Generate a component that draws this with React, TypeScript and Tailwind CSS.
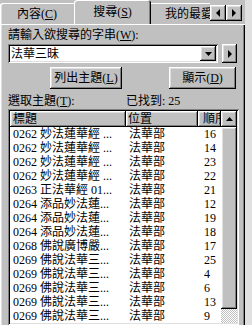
import React from 'react';

const raised =
  'shadow-[inset_-1px_-1px_0_#000,inset_1px_1px_0_#fff,inset_-2px_-2px_0_#808080,inset_2px_2px_0_#dfdfdf]';
const sunken =
  'shadow-[inset_1px_1px_0_#808080,inset_-1px_-1px_0_#fff,inset_2px_2px_0_#000,inset_-2px_-2px_0_#dfdfdf]';

const rows = [
  ['0262 妙法蓮華經 ...', '法華部', '16'],
  ['0262 妙法蓮華經 ...', '法華部', '14'],
  ['0262 妙法蓮華經 ...', '法華部', '23'],
  ['0262 妙法蓮華經 ...', '法華部', '22'],
  ['0263 正法華經 01...', '法華部', '21'],
  ['0264 添品妙法蓮...', '法華部', '12'],
  ['0264 添品妙法蓮...', '法華部', '19'],
  ['0264 添品妙法蓮...', '法華部', '18'],
  ['0268 佛說廣博嚴...', '法華部', '17'],
  ['0269 佛說法華三...', '法華部', '25'],
  ['0269 佛說法華三...', '法華部', '4'],
  ['0269 佛說法華三...', '法華部', '6'],
  ['0269 佛說法華三...', '法華部', '13'],
  ['0269 佛說法華三...', '法華部', '9'],
];

function Tri({ dir }: { dir: 'left' | 'right' | 'down' | 'up' }) {
  const pts = {
    left: '5,0 5,8 1,4',
    right: '1,0 1,8 5,4',
    down: '0,2 7,2 3.5,6',
    up: '0,6 7,6 3.5,2',
  }[dir];
  const w = dir === 'left' || dir === 'right' ? 6 : 7;
  return (
    <svg width={w} height={8} viewBox={`0 0 ${w} 8`}>
      <polygon points={pts} fill="#000" />
    </svg>
  );
}

export default function App() {
  return (
    <div
      className="w-[252px] h-[325px] bg-[#e0e0e0] overflow-hidden flex flex-col text-[12px] leading-[14px] text-black"
      style={{ fontFamily: '"Liberation Serif", "Noto Sans CJK TC", serif' }}
    >
      {/* tab strip */}
      <div className="h-[24px] flex items-start bg-[#c0c0c0] w-[245px]">
        <div className="flex-1 h-full flex items-end overflow-hidden">
          <div className="w-[74px] h-[21px] shrink-0 flex items-center justify-center rounded-tl-[3px] shadow-[inset_1px_1px_0_#fff,inset_2px_0_0_#dfdfdf]">
            內容(<span className="underline">C</span>)
          </div>
          <div className="relative z-10 -mb-px w-[77px] h-[25px] shrink-0 bg-[#c0c0c0] flex items-center justify-center pb-[2px] rounded-t-[3px] shadow-[inset_1px_1px_0_#fff,inset_-1px_0_0_#000,inset_-2px_0_0_#808080]">
            搜尋(<span className="underline">S</span>)
          </div>
          <div className="w-[80px] h-[21px] shrink-0 flex items-center pl-[14px] whitespace-nowrap rounded-tr-[3px] shadow-[inset_0_1px_0_#fff,inset_-1px_0_0_#000,inset_-2px_0_0_#808080]">
            我的最愛(<span className="underline">F</span>)
          </div>
        </div>
        <div className="flex mt-[5px] mr-[3px]">
          <div className={`w-[16px] h-[16px] bg-[#c0c0c0] flex items-center justify-center ${raised}`}>
            <Tri dir="left" />
          </div>
          <div className={`w-[16px] h-[16px] bg-[#c0c0c0] flex items-center justify-center ${raised}`}>
            <Tri dir="right" />
          </div>
        </div>
      </div>

      {/* tab page */}
      <div className="w-[245px] flex-1 bg-[#c0c0c0] pl-[8px] pr-[4px] pt-[4px] flex flex-col shadow-[inset_1px_1px_0_#fff,inset_2px_0_0_#dfdfdf,inset_-1px_0_0_#000,inset_-2px_0_0_#808080]">
        <div className="whitespace-nowrap">
          請輸入欲搜尋的字串(<span className="underline">W</span>):
        </div>

        <div className="mt-[2px] flex h-[19px]">
          <div className={`w-[210px] h-full bg-white flex items-center pl-[3px] pr-[2px] ${sunken}`}>
            <span className="flex-1">法華三昧</span>
            <div className={`w-[16px] h-[15px] bg-[#c0c0c0] flex items-center justify-center ${raised}`}>
              <Tri dir="down" />
            </div>
          </div>
          <div className={`ml-[4px] w-[15px] h-full bg-[#c0c0c0] flex items-center justify-center ${raised}`}>
            <Tri dir="right" />
          </div>
        </div>

        <div className="mt-[4px] flex h-[22px]">
          <div className={`ml-[42px] w-[72px] h-full flex items-center justify-center ${raised}`}>
            列出主題(<span className="underline">L</span>)
          </div>
          <div className={`ml-[47px] w-[67px] h-full flex items-center justify-center ${raised}`}>
            顯示(<span className="underline">D</span>)
          </div>
        </div>

        <div className="mt-[5px] flex whitespace-nowrap">
          <span className="w-[118px]">
            選取主題(<span className="underline">T</span>):
          </span>
          <span>已找到: 25</span>
        </div>

        <div className={`mt-[1px] w-[231px] flex-1 bg-white p-[2px] flex ${sunken}`}>
          <div className="flex-1 flex flex-col overflow-hidden">
            <div className="flex h-[16px] shrink-0 bg-[#c0c0c0]">
              <div className={`w-[116px] pl-[3px] flex items-center ${raised}`}>標題</div>
              <div className={`w-[72px] pl-[2px] flex items-center ${raised}`}>位置</div>
              <div className={`w-[23px] pl-[5px] flex items-center overflow-hidden whitespace-nowrap ${raised}`}>順序</div>
            </div>
            {rows.map((r, i) => (
              <div key={i} className="flex h-[14px] shrink-0 whitespace-nowrap">
                <div className="w-[116px] pl-[3px] overflow-hidden">{r[0]}</div>
                <div className="w-[72px] pl-[3px]">{r[1]}</div>
                <div className="w-[23px] pl-[6px]">{r[2]}</div>
              </div>
            ))}
          </div>
          <div className="w-[16px] flex flex-col">
            <div className={`h-[16px] shrink-0 bg-[#c0c0c0] flex items-center justify-center ${raised}`}>
              <Tri dir="up" />
            </div>
            <div className={`h-[182px] shrink-0 bg-[#c0c0c0] ${raised}`} />
            <div className="flex-1 bg-[repeating-conic-gradient(#fff_0_25%,#c0c0c0_0_50%)] bg-[length:2px_2px]" />
          </div>
        </div>
      </div>
    </div>
  );
}
